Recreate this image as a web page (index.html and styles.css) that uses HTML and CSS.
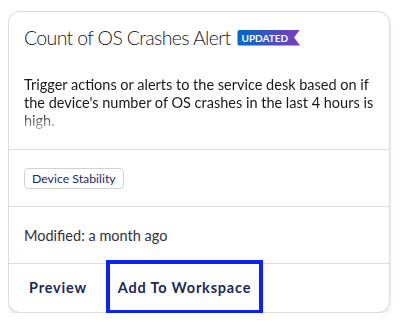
FILE: index.html
```html
<!DOCTYPE html>
<html lang="en">
<head>
    <meta charset="UTF-8">
    <meta name="viewport" content="width=device-width, initial-scale=1.0">
    <title>Count of OS Crashes Alert</title>
    <link rel="stylesheet" href="styles.css">
</head>
<body>
    <div class="card">
        <div class="card-header">
            <div class="title-row">
                <h3 class="card-title">Count of OS Crashes Alert</h3>
                <span class="badge">UPDATED</span>
            </div>
            <p class="description">Trigger actions or alerts to the service desk based on if the device's number of OS crashes in the last 4 hours is high.</p>
        </div>
        <div class="card-tags">
            <span class="tag">Device Stability</span>
        </div>
        <div class="card-meta">Modified: a month ago</div>
        <div class="card-actions">
            <button class="action">Preview</button>
            <button class="action focused">Add To Workspace</button>
        </div>
    </div>
</body>
</html>
```

FILE: styles.css
```css
* {
    margin: 0;
    padding: 0;
    box-sizing: border-box;
    font-family: 'Lato', sans-serif;
}

body {
    background: #ffffff;
    color: #1a1a1a;
    margin: 8px;
}

.card {
    width: 382px;
    margin-top: 3px;
    background: white;
    border: 1px solid #dcdcdc;
    border-radius: 12px;
    box-shadow: 0 2px 4px rgba(0, 0, 0, 0.12);
}

.card-header {
    padding: 14px 15px 0;
    height: 138px;
    border-bottom: 1px solid #dedede;
}

.title-row {
    display: flex;
    align-items: center;
    gap: 7px;
}

.card-title {
    font-size: 19.5px;
    font-weight: 300;
    letter-spacing: -0.65px;
    color: #1a1a1a;
}

.badge {
    display: inline-block;
    height: 16px;
    line-height: 16px;
    padding: 0 12px 0 4px;
    font-size: 10px;
    font-weight: 700;
    color: white;
    border-radius: 3px 0 0 3px;
    background: linear-gradient(90deg, #0068cc, #7b3db9);
    clip-path: polygon(0 0, 100% 0, calc(100% - 6px) 50%, 100% 100%, 0 100%);
}

.description {
    margin-top: 27px;
    font-size: 14.5px;
    line-height: 18px;
    height: 56px;
    overflow: hidden;
    color: #1a1a1a;
    -webkit-mask-image: linear-gradient(180deg, #000 62%, rgba(0, 0, 0, 0.25) 100%);
    mask-image: linear-gradient(180deg, #000 62%, rgba(0, 0, 0, 0.25) 100%);
}

.card-tags {
    height: 57px;
    display: flex;
    align-items: center;
    padding: 0 15px;
    border-bottom: 1px solid #dedede;
}

.tag {
    display: inline-block;
    padding: 2px 7px;
    font-size: 12.3px;
    color: #1b2a66;
    border: 1px solid #d2d2d2;
    border-radius: 4px;
}

.card-meta {
    height: 57px;
    display: flex;
    align-items: center;
    padding: 0 15px;
    font-size: 14.5px;
    color: #333333;
    border-bottom: 1px solid #dedede;
}

.card-actions {
    display: flex;
    gap: 15px;
    padding: 0 12px 2px;
}

.action {
    height: 46px;
    padding: 0 8px;
    background: none;
    border: none;
    font-size: 14.5px;
    font-weight: 700;
    letter-spacing: 0.8px;
    color: #1b2a5c;
}

.action.focused {
    outline: 4px solid #0a20ff;
}
```
